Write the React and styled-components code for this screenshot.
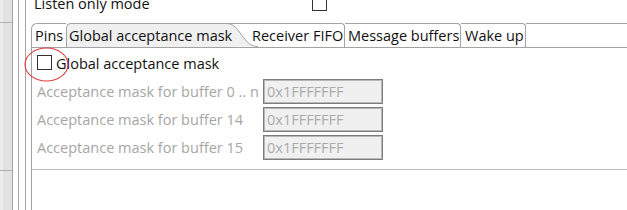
import React from 'react';
import styled, { createGlobalStyle } from 'styled-components';

const GlobalStyle = createGlobalStyle`
  html, body {
    margin: 0;
    padding: 0;
    background: #ffffff;
  }
  body {
    font-family: "Open Sans", "Noto Sans", sans-serif;
    font-size: 14.5px;
    color: #111111;
  }
`;

const line = '#a3a3a3';

const Page = styled.div`
  position: relative;
  display: flex;
  width: 627px;
  height: 210px;
  overflow: hidden;
  background: #ffffff;
`;

const Gutter = styled.div`
  width: 13px;
  flex: none;
  padding-top: 22px;
  box-sizing: border-box;
  background: linear-gradient(to right, #ececec 3px, #e2e2e2 3px);
  border-right: 1px solid ${line};
`;

const GutterPane = styled.div`
  height: 147px;
  border-top: 1px solid #b0b0b0;
  border-bottom: 1px solid #b0b0b0;
`;

const Rail = styled.div`
  width: ${p => p.$width}px;
  flex: none;
  border-right: ${p => (p.$line ? `1px solid ${line}` : 'none')};
`;

const Main = styled.div`
  flex: 1;
  display: flex;
  flex-direction: column;
  min-width: 0;
`;

const TopRow = styled.div`
  display: grid;
  grid-template-columns: 278px 15px;
  height: 19px;
  margin-top: -6px;
  margin-bottom: 10px;
  padding-left: 3px;
  line-height: 19px;
`;

const Box = styled.span`
  display: block;
  width: 15px;
  height: 15px;
  box-sizing: border-box;
  border: 1px solid #333333;
  background: #ffffff;
  margin-top: ${p => p.$top || 0}px;
`;

const Folder = styled.div`
  flex: 1;
  display: flex;
  flex-direction: column;
`;

const TabStrip = styled.div`
  display: flex;
  height: 24px;
  border-bottom: 1px solid ${line};
`;

const Tab = styled.div`
  position: relative;
  z-index: 2;
  flex: none;
  width: ${p => p.$width}px;
  height: 24px;
  box-sizing: border-box;
  padding-left: ${p => p.$left ?? 3}px;
  line-height: 23px;
  white-space: nowrap;
  color: #111111;
  border-top: 1px solid ${line};
  border-left: ${p => (p.$edgeLeft ? `1px solid ${line}` : 'none')};
  border-right: ${p => (p.$edgeRight ? `1px solid ${line}` : 'none')};
  border-top-left-radius: ${p => p.$roundLeft || 0}px;
  border-top-right-radius: ${p => p.$roundRight || 0}px;
  background: ${p => (p.$active ? '#f0f0f0' : 'transparent')};
`;

const CurveBox = styled.svg`
  position: relative;
  z-index: 1;
  flex: none;
  width: 32px;
  height: 24px;
  margin-right: -12px;
  overflow: visible;
`;

const StripFill = styled.div`
  flex: 1;
  border-top: 1px solid ${line};
`;

const Pane = styled.div`
  flex: 1;
  display: flex;
  flex-direction: column;
  border-left: 1px solid ${line};
`;

const Body = styled.div`
  height: 122px;
  padding: 7px 0 0 5px;
  box-sizing: border-box;
  border-bottom: 1px solid #bdbdbd;
`;

const CheckRow = styled.label`
  display: flex;
  align-items: center;
  gap: 4px;
  height: 15px;
  line-height: 19px;
`;

const CheckText = styled.span`
  position: relative;
  top: 1px;
`;

const FormGrid = styled.div`
  display: grid;
  grid-template-columns: 226px 120px;
  grid-auto-rows: 25px;
  row-gap: 3px;
  margin-top: 9px;
  align-items: center;
`;

const FieldLabel = styled.span`
  color: #a6a6a6;
  line-height: 19px;
  white-space: nowrap;
`;

const Field = styled.div`
  height: 25px;
  box-sizing: border-box;
  padding-left: 3px;
  border: 1px solid #7c7c7c;
  box-shadow: inset 0 0 0 1px #b8b8b8;
  background: #f0f0f0;
  color: #ababab;
  line-height: 23px;
`;

const Annotation = styled.svg`
  position: absolute;
  left: 23px;
  top: 46px;
  width: 48px;
  height: 38px;
  pointer-events: none;
`;

function Curve() {
  const d = 'M0 0.5 C8 0.5 11 6 16 12.5 S24 23.5 32 23.5';
  return (
    <CurveBox viewBox="0 0 32 24">
      <path d={`${d} L0 24 Z`} fill="#f0f0f0" />
      <path d="M0 0.5 H32" stroke={line} strokeWidth="1" fill="none" />
      <path d={d} stroke={line} strokeWidth="1" fill="none" />
    </CurveBox>
  );
}

const rows = [
  { label: 'Acceptance mask for buffer 0 .. n', value: '0x1FFFFFFF' },
  { label: 'Acceptance mask for buffer 14', value: '0x1FFFFFFF' },
  { label: 'Acceptance mask for buffer 15', value: '0x1FFFFFFF' },
];

export default function App() {
  return (
    <>
      <GlobalStyle />
      <Page>
        <Gutter>
          <GutterPane />
        </Gutter>
        <Rail $width={5} $line />
        <Rail $width={6} $line />
        <Rail $width={5} />
        <Main>
          <TopRow>
            <span>Listen only mode</span>
            <Box $top={2} />
          </TopRow>
          <Folder>
            <TabStrip>
              <Tab $width={35} $edgeLeft $roundLeft={6} $left={3}>Pins</Tab>
              <Tab $width={160} $active $edgeLeft $roundLeft={5} $left={2}>
                Global acceptance mask
              </Tab>
              <Curve />
              <Tab $width={99} $edgeRight $roundRight={4} $left={6}>Receiver FIFO</Tab>
              <Tab $width={116} $edgeRight $roundRight={4} $left={3}>Message buffers</Tab>
              <Tab $width={65} $edgeRight $roundRight={4} $left={4}>Wake up</Tab>
              <StripFill />
            </TabStrip>
            <Pane>
              <Body>
                <CheckRow>
                  <Box />
                  <CheckText>Global acceptance mask</CheckText>
                </CheckRow>
                <FormGrid>
                  {rows.map(r => (
                    <React.Fragment key={r.label}>
                      <FieldLabel>{r.label}</FieldLabel>
                      <Field>{r.value}</Field>
                    </React.Fragment>
                  ))}
                </FormGrid>
              </Body>
            </Pane>
          </Folder>
        </Main>
        <Annotation viewBox="0 0 48 38">
          <ellipse cx="23.5" cy="18.5" rx="21.5" ry="16.5" fill="none" stroke="#e2383a" strokeWidth="1.1" />
        </Annotation>
      </Page>
    </>
  );
}
